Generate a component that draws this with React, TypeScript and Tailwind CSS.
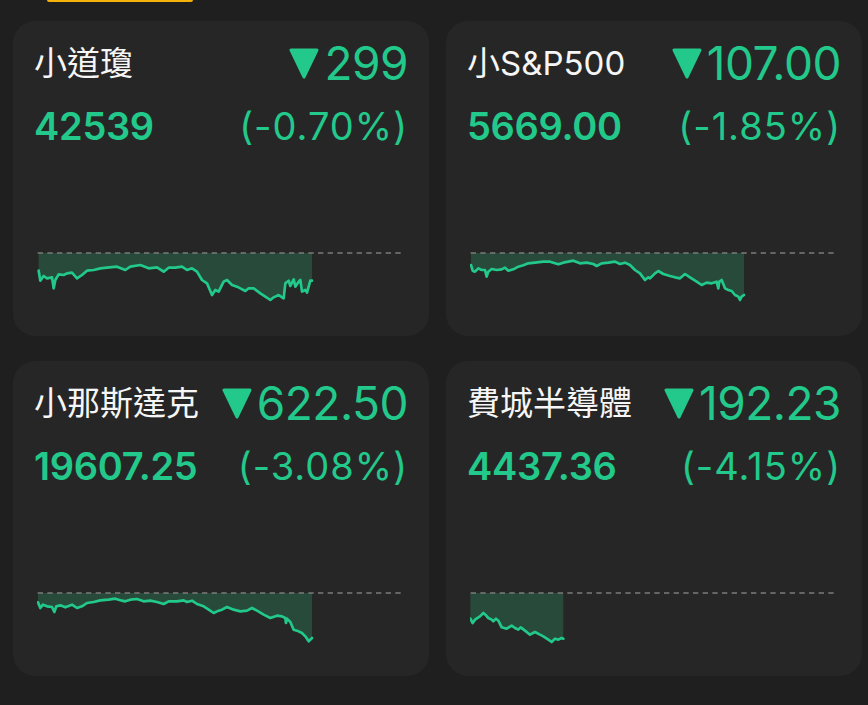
import React from "react";

type Pt = [number, number];

interface Quote {
  name: string;
  change: string;
  price: string;
  pct: string;
  dy: number;
  line: Pt[];
}

const quotes: Quote[] = [
  {
    name: "小道瓊",
    change: "299",
    price: "42539",
    pct: "(-0.70%)",
    dy: 0,
    line: [
      [115, 152], [120, 182], [130, 168], [140, 175], [155, 172], [160, 205], [165, 180], [175, 163],
      [190, 165], [200, 160], [215, 158], [230, 175], [245, 165], [260, 152], [280, 150], [300, 145],
      [320, 143], [350, 140], [375, 150], [390, 140], [420, 135], [445, 145], [470, 142], [490, 155],
      [505, 143], [525, 143], [545, 140], [560, 150], [575, 145], [590, 155], [605, 180], [620, 190],
      [635, 225], [645, 210], [655, 215], [670, 185], [680, 180], [695, 195], [710, 200], [720, 205],
      [735, 213], [745, 205], [760, 205], [780, 220], [795, 230], [810, 240], [820, 232], [835, 225],
      [845, 232], [850, 235], [855, 190], [865, 182], [870, 198], [880, 178], [885, 200], [895, 185],
      [900, 180], [905, 215], [915, 210], [920, 218], [930, 182], [935, 182],
    ],
  },
  {
    name: "小S&P500",
    change: "107.00",
    price: "5669.00",
    pct: "(-1.85%)",
    dy: 0,
    line: [
      [113, 135], [118, 152], [125, 155], [135, 145], [145, 150], [155, 150], [160, 170], [165, 155],
      [175, 147], [190, 150], [205, 148], [215, 143], [225, 152], [240, 148], [255, 140], [270, 136],
      [285, 130], [305, 128], [330, 125], [350, 125], [375, 133], [390, 128], [420, 122], [440, 130],
      [460, 128], [480, 132], [490, 138], [505, 130], [525, 128], [545, 125], [560, 132], [575, 128],
      [590, 135], [605, 150], [620, 160], [635, 180], [645, 172], [650, 175], [665, 160], [675, 153],
      [690, 162], [710, 168], [725, 172], [740, 175], [755, 162], [770, 172], [790, 185], [805, 195],
      [820, 188], [835, 190], [850, 185], [855, 205], [858, 185], [865, 180], [875, 205], [885, 210],
      [895, 213], [905, 225], [915, 230], [920, 240], [925, 230], [932, 225],
    ],
  },
  {
    name: "小那斯達克",
    change: "622.50",
    price: "19607.25",
    pct: "(-3.08%)",
    dy: 4,
    line: [
      [113, 123], [120, 140], [128, 130], [140, 135], [155, 137], [162, 152], [168, 135], [180, 132],
      [195, 138], [215, 130], [230, 140], [245, 135], [260, 125], [280, 122], [300, 117], [325, 115],
      [345, 112], [365, 118], [375, 120], [390, 115], [410, 113], [430, 120], [450, 118], [470, 122],
      [490, 128], [505, 120], [530, 120], [550, 117], [560, 122], [575, 118], [590, 128], [610, 135],
      [625, 145], [640, 155], [655, 148], [665, 145], [680, 137], [700, 145], [720, 150], [740, 148],
      [755, 140], [770, 148], [790, 160], [810, 170], [830, 163], [845, 165], [855, 170], [857, 185],
      [860, 172], [870, 182], [880, 205], [890, 208], [905, 215], [915, 225], [925, 240], [935, 230],
    ],
  },
  {
    name: "費城半導體",
    change: "192.23",
    price: "4437.36",
    pct: "(-4.15%)",
    dy: 4,
    line: [
      [111, 172], [118, 185], [125, 175], [140, 165], [150, 155], [158, 162], [165, 170], [175, 175],
      [180, 180], [188, 172], [195, 178], [205, 198], [220, 202], [235, 193], [245, 200], [255, 205],
      [262, 198], [275, 208], [290, 220], [305, 212], [320, 220], [330, 225], [345, 235], [355, 242],
      [365, 232], [375, 235], [385, 230], [390, 232],
    ],
  },
];

const BASE = 99;

function Spark({ line, dy }: { line: Pt[]; dy: number }) {
  const pts = line.map(([x, y]) => [x, y + dy] as Pt);
  const d = pts.map(([x, y], i) => `${i ? "L" : "M"}${x} ${y}`).join(" ");
  const first = pts[0];
  const last = pts[pts.length - 1];
  const area = `M${first[0]} ${BASE} ${pts.map(([x, y]) => `L${x} ${y}`).join(" ")} L${last[0]} ${BASE} Z`;

  return (
    <svg width="365" height="60" viewBox="110 90 1095 180" className="block">
      <path d={area} fill="#274a3b" />
      <line x1="112" y1={BASE} x2="1203" y2={BASE} stroke="#7b7b7b" strokeWidth="5" strokeDasharray="16 13" />
      <path d={d} fill="none" stroke="#22c98b" strokeWidth="8" strokeLinejoin="round" strokeLinecap="round" />
    </svg>
  );
}

function QuoteCard({ q }: { q: Quote }) {
  return (
    <div className="flex h-[315px] flex-col rounded-[22px] bg-[#262626]">
      <div className="mt-[19px] flex h-[46px] items-center justify-between pl-[21px] pr-[21px]">
        <span className="text-[33px] font-normal leading-none text-[#f6f6f6]">{q.name}</span>
        <div className="flex items-center gap-[5px] text-[#22c98b]">
          <svg width="30" height="31" viewBox="0 0 30 31" className="shrink-0">
            <path d="M2 2 H28 L15 29 Z" fill="#22c98b" stroke="#22c98b" strokeWidth="3" strokeLinejoin="round" />
          </svg>
          <span className="text-[46px] font-normal leading-none tracking-[-0.5px]">{q.change}</span>
        </div>
      </div>
      <div className="mt-[17px] flex h-[46px] items-center justify-between pl-[21px] pr-[21px] text-[#22c98b]">
        <span className="text-[38px] font-semibold leading-none tracking-[-0.3px]">{q.price}</span>
        <span className="text-[38px] font-normal leading-none tracking-[1px]">{q.pct}</span>
      </div>
      <div className="ml-[24px] mt-[101px]">
        <Spark line={q.line} dy={q.dy} />
      </div>
    </div>
  );
}

export default function App() {
  return (
    <div
      className="h-[705px] w-[868px] overflow-hidden bg-[#1f1f1f]"
      style={{ fontFamily: "Inter, 'Noto Sans CJK TC', sans-serif" }}
    >
      <div className="ml-[47px] h-[2px] w-[146px] rounded-b-full bg-[#f5b30a]" />
      <div className="ml-[13px] mt-[19px] grid grid-cols-[416px_416px] gap-x-[17px] gap-y-[25px]">
        {quotes.map((q) => (
          <QuoteCard key={q.name} q={q} />
        ))}
      </div>
    </div>
  );
}
